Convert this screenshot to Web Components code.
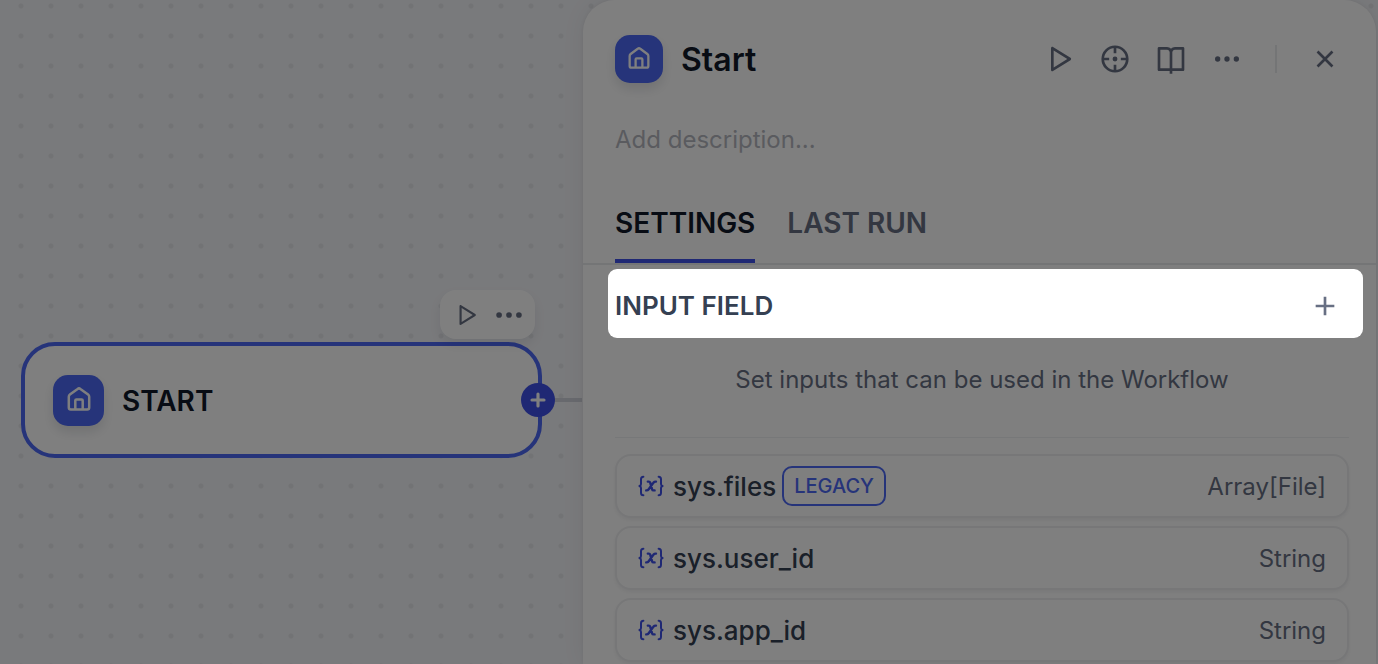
<!DOCTYPE html>
<html lang="en">
<head>
<meta charset="utf-8">
<title>Workflow – Start node</title>
<style>
  html, body { height: 100%; }
  body {
    margin: 0;
    overflow: hidden;
    font-family: Inter, "Liberation Sans", sans-serif;
    color: #101828;
    --primary: #101828;
    --secondary: #354052;
    --tertiary: #676f83;
    --brand: #3f51e8;
    --brand-soft: #4c68f4;
    --line: #e9eaed;
  }
</style>
</head>
<body>
<workflow-app>
  <flow-canvas slot="canvas">
    <flow-node label="START"></flow-node>
  </flow-canvas>
  <node-panel slot="panel" heading="Start">
    <panel-tabs slot="tabs"></panel-tabs>
    <field-header>INPUT FIELD</field-header>
    <field-hint>Set inputs that can be used in the Workflow</field-hint>
    <variable-list>
      <variable-row type="Array[File]" badge="LEGACY">sys.files</variable-row>
      <variable-row type="String">sys.user_id</variable-row>
      <variable-row type="String">sys.app_id</variable-row>
    </variable-list>
  </node-panel>
</workflow-app>

<script>
const ICONS = {
  play: '<path fill="currentColor" d="M8 18.3915V5.60846L18.2264 12L8 18.3915ZM6 3.80421V20.1957C6 20.9812 6.86395 21.46 7.53 21.0437L20.6432 12.848C21.2699 12.4563 21.2699 11.5436 20.6432 11.152L7.53 2.95621C6.86395 2.53993 6 3.01878 6 3.80421Z"/>',
  target: '<g fill="none" stroke="currentColor" stroke-width="2.300"><circle cx="12" cy="12" r="10.500"/><path d="M12 1.500v5.500M12 17v5.500M1.500 12h5.500M17 12H22.500"/></g><circle cx="12" cy="12" r="2.100" fill="currentColor"/>',
  book: '<path fill="currentColor" d="M13 21V23H11V21H3C2.44772 21 2 20.5523 2 20V4C2 3.44772 2.44772 3 3 3H9C10.1947 3 11.2671 3.52375 12 4.35418C12.7329 3.52375 13.8053 3 15 3H21C21.5523 3 22 3.44772 22 4V20C22 20.5523 21.5523 21 21 21H13ZM20 19V5H15C13.8954 5 13 5.89543 13 7V19H20ZM11 19V7C11 5.89543 10.1053 5 9 5H4V19H11Z"/>',
  more: '<g fill="currentColor"><circle cx="5" cy="12" r="2"/><circle cx="12" cy="12" r="2"/><circle cx="19" cy="12" r="2"/></g>',
  close: '<path fill="none" stroke="currentColor" stroke-width="2" d="M6.400 6.400L17.600 17.600M17.600 6.400L6.400 17.600"/>',
  plus: '<path fill="none" stroke="currentColor" stroke-width="2" d="M12 5V19M5 12H19"/>',
  plusBold: '<path fill="none" stroke="currentColor" stroke-width="4.200" stroke-linecap="round" d="M12 4V20M4 12H20"/>',
  home: '<path fill="none" stroke="currentColor" stroke-width="2.500" stroke-linejoin="round" d="M1.800 9.800C1.800 8.900 2.100 8.200 2.900 7.600L10.600 1.900C11.500 1.200 12.500 1.200 13.400 1.900L21.100 7.600C21.900 8.200 22.200 8.900 22.200 9.800V20.600C22.200 21.900 21.500 22.600 20.200 22.600H3.800C2.500 22.600 1.800 21.900 1.800 20.600ZM8.300 22.600V13.600C8.300 12.900 8.700 12.500 9.400 12.500H14.600C15.300 12.500 15.700 12.900 15.700 13.600V22.600"/>',
  variable: '<g fill="none" stroke="currentColor" stroke-linecap="round" stroke-linejoin="round"><path stroke-width="2" d="M5.400 1.800C3.600 1.800 3 2.700 3 4.300V9C3 10.200 2.500 10.700 1.400 11C2.500 11.300 3 11.800 3 13V17.700C3 19.300 3.600 20.200 5.400 20.200M20.600 1.800C22.400 1.800 23 2.700 23 4.300V9C23 10.200 23.500 10.700 24.600 11C23.500 11.300 23 11.800 23 13V17.700C23 19.300 22.400 20.200 20.600 20.200"/><path stroke-width="2.400" d="M9.800 6.600H10.800C11.600 6.600 12 7 12.200 7.700L14.100 14.300C14.300 15 14.700 15.400 15.400 15.400H16.600M18 6.600H17.600C16.700 6.600 16.100 6.900 15.500 7.600L10.700 14.300C10.100 15.100 9.500 15.400 8.600 15.400H8.200"/></g>',
};
const icon = (name, size, box = '0 0 24 24', height = size) =>
  `<svg width="${size}" height="${height}" viewBox="${box}" aria-hidden="true">${ICONS[name]}</svg>`;

class Part extends HTMLElement {
  connectedCallback() {
    if (this.shadowRoot) return;
    const t = document.createElement('template');
    t.innerHTML = `<style>
      *, :host { box-sizing: border-box; }
      svg { display: block; }
      button { font: inherit; color: inherit; background: none; border: 0; padding: 0; margin: 0;
               display: grid; place-items: center; cursor: pointer; }
      ${this.styles()}</style>${this.markup()}`;
    this.attachShadow({ mode: 'open' }).append(t.content.cloneNode(true));
  }
}

customElements.define('workflow-app', class extends Part {
  styles() { return `
    :host { display: flex; height: 100%; padding-right: 2px; overflow: hidden;
            background: radial-gradient(circle at 15px 15px, #e5e6ea 2px, transparent 3px) 6px -9px / 30px 30px, #f3f4f8; }
    ::slotted([slot=canvas]) { flex: 1 1 583px; min-width: 0; }
    ::slotted([slot=panel]) { flex: 1 1 793px; min-width: 0; }`; }
  markup() { return `<slot name="canvas"></slot><slot name="panel"></slot>`; }
});

/* Free canvas: the node and its edge are placed by coordinates. */
customElements.define('flow-canvas', class extends Part {
  styles() { return `
    :host { display: block; position: relative; }
    ::slotted(flow-node) { position: absolute; left: 21px; top: 342px; width: 521px; }
    .edge { position: absolute; left: 540px; right: 1px; top: 398px; height: 4px; background: #d0d3dc; }`; }
  markup() { return `<div class="edge"></div><slot></slot>`; }
});

customElements.define('node-icon', class extends Part {
  styles() { return `
    :host { display: grid; place-items: center; flex: none; color: #fff; background: var(--brand-soft);
            width: var(--tile); height: var(--tile); border-radius: 15px; padding-bottom: 2px;
            box-shadow: 0 6px 12px rgba(16,24,40,.12); }`; }
  markup() { return icon('home', this.getAttribute('size')); }
});

customElements.define('flow-node', class extends Part {
  styles() { return `
    :host { display: block; }
    .card { display: flex; align-items: center; gap: 18px; height: 116px; padding: 0 28px;
            background: #fff; border: 4px solid var(--brand-soft); border-radius: 34px; }
    node-icon { --tile: 51px; }
    h3 { margin: 0; padding-top: 2px; font-size: 28px; line-height: 36px; font-weight: 600; }
    .tools { position: absolute; right: 7px; top: -52px; display: flex; align-items: center; gap: 9px;
             height: 49px; padding: 0 9px; border-radius: 16px; background: #fff; color: var(--tertiary);
             box-shadow: 0 6px 12px rgba(16,24,40,.08); }
    .tools button { width: 34px; height: 34px; }
    .add { position: absolute; right: -13px; top: 41px; width: 34px; height: 34px; border-radius: 50%;
           background: var(--brand); color: #fff; }`; }
  markup() { return `
    <div class="card"><node-icon size="24"></node-icon><h3>${this.getAttribute('label')}</h3></div>
    <div class="tools"><button aria-label="Run this step">${icon('play', 26)}</button><button aria-label="More">${icon('more', 34)}</button></div>
    <button class="add" aria-label="Add next node">${icon('plusBold', 18)}</button>`; }
});

customElements.define('node-panel', class extends Part {
  styles() { return `
    :host { display: block; position: relative; z-index: 1; background: #fff; border-radius: 32px 32px 0 0;
            box-shadow: 0 0 4px rgba(16,24,40,.06), 0 0 24px rgba(16,24,40,.06); }
    header { display: flex; align-items: center; gap: 18px; padding: 35px 27px 0 32px; height: 83px; }
    node-icon { --tile: 48px; }
    h2 { margin: 0; padding-top: 2px; flex: 1; font-size: 32px; line-height: 40px; font-weight: 600; }
    .actions { display: flex; align-items: center; gap: 8px; color: var(--tertiary); }
    .actions button { width: 48px; height: 48px; }
    .actions i { width: 2px; height: 28px; margin: 0 16px; background: #e9eaed; }
    .desc { padding: 37px 32px 0; }
    input { display: block; width: 100%; height: 40px; padding: 0; border: 0; outline: 0; background: none;
            font: 400 24px/40px Inter, "Liberation Sans", sans-serif; color: var(--secondary); }
    input::placeholder { color: #b5b7bf; opacity: 1; }`; }
  markup() { return `
    <header><node-icon size="22"></node-icon><h2>${this.getAttribute('heading')}</h2>
      <div class="actions">
        <button aria-label="Run this step">${icon('play', 32)}</button>
        <button aria-label="Locate node">${icon('target', 28)}</button>
        <button aria-label="Help">${icon('book', 32)}</button>
        <button aria-label="More">${icon('more', 32)}</button>
        <i></i>
        <button aria-label="Close">${icon('close', 32)}</button>
      </div>
    </header>
    <div class="desc"><input aria-label="Description" placeholder="Add description..."></div>
    <slot name="tabs"></slot><slot></slot>`; }
});

customElements.define('panel-tabs', class extends Part {
  styles() { return `
    :host { display: flex; gap: 32px; margin-top: 24px; padding: 0 32px; border-bottom: 2px solid #e9eaed; }
    button { height: 79px; padding-top: 3px; border-bottom: 4px solid transparent;
             font-size: 28px; line-height: 36px; font-weight: 600; color: var(--tertiary); }
    button[aria-selected=true] { color: var(--primary); border-color: var(--brand); }`; }
  markup() { return `<button role="tab" aria-selected="true">SETTINGS</button><button role="tab" aria-selected="false">LAST RUN</button>`; }
});

/* Highlighted row of the tour: its spread shadow dims the rest of the page. */
customElements.define('field-header', class extends Part {
  styles() { return `
    :host { display: flex; align-items: center; justify-content: space-between; position: relative; z-index: 5;
            margin: 4px 13px 0 25px; height: 69px; padding: 4px 14px 0 7px; background: #fff; border-radius: 9px;
            box-shadow: 0 0 0 200vmax rgba(0,0,0,.5); }
    h4 { margin: 0; font-size: 26px; line-height: 36px; font-weight: 600; color: var(--secondary); }
    button { width: 48px; height: 48px; color: var(--tertiary); }`; }
  markup() { return `<h4><slot></slot></h4><button aria-label="Add input field">${icon('plus', 32)}</button>`; }
});

customElements.define('field-hint', class extends Part {
  styles() { return `
    :host { display: block; margin: 24px 27px 0 32px; padding-bottom: 39px; text-align: center;
            font-size: 24px; line-height: 36px; color: var(--tertiary); border-bottom: 1px solid #eff0f2; }`; }
  markup() { return `<slot></slot>`; }
});

customElements.define('variable-list', class extends Part {
  styles() { return `:host { display: grid; gap: 8px; padding: 16px 27px 0 32px; }`; }
  markup() { return `<slot></slot>`; }
});

customElements.define('variable-row', class extends Part {
  styles() { return `
    :host { display: flex; align-items: center; height: 64px; padding: 0 21px; background: #fff;
            border: 2px solid #eeeff1; border-radius: 16px; box-shadow: 0 2px 4px rgba(16,24,40,.06);
            font-size: 26px; line-height: 36px; font-weight: 500; color: var(--secondary); }
    svg { color: var(--brand); margin-right: 9px; }
    .name, .type { padding-top: 2px; }
    .badge { height: 40px; margin-left: 6px; padding: 0 10px; border: 2px solid var(--brand-soft); border-radius: 10px;
             font-size: 20px; line-height: 36px; color: var(--brand-soft); }
    .type { margin-left: auto; font-size: 24px; font-weight: 400; color: var(--tertiary); }`; }
  markup() {
    const badge = this.getAttribute('badge');
    return `${icon('variable', 26, '0 0 26 22', 22)}<span class="name"><slot></slot></span>${badge ? `<span class="badge">${badge}</span>` : ''}<span class="type">${this.getAttribute('type')}</span>`;
  }
});
</script>
</body>
</html>
